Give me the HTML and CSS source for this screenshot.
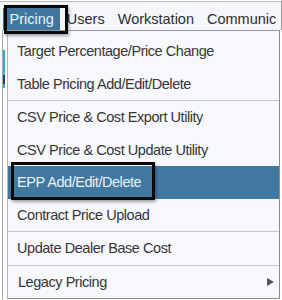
FILE: index.html
```html
<!DOCTYPE html>
<html>
<head>
<meta charset="utf-8">
<link rel="stylesheet" href="styles.css">
</head>
<body>
<div class="screen">
  <div class="menubar">
    <div class="top-item active">Pricing</div>
    <div class="top-item">Users</div>
    <div class="top-item">Workstation</div>
    <div class="top-item">Communic</div>
  </div>
  <div class="body-row">
    <div class="page-edge"><span class="edge-blue"></span><span class="edge-dark"></span></div>
    <div class="dropdown">
      <div class="item">Target Percentage/Price Change</div>
      <div class="item">Table Pricing Add/Edit/Delete</div>
      <div class="sep"></div>
      <div class="item">CSV Price &amp; Cost Export Utility</div>
      <div class="item">CSV Price &amp; Cost Update Utility</div>
      <div class="item selected">EPP Add/Edit/Delete</div>
      <div class="item">Contract Price Upload</div>
      <div class="sep"></div>
      <div class="item">Update Dealer Base Cost</div>
      <div class="sep"></div>
      <div class="item submenu"><span class="legacy">Legacy Pricing</span><span class="arrow"></span></div>
    </div>
  </div>
  <div class="mark mark-pricing"></div>
  <div class="mark mark-epp"></div>
</div>
</body>
</html>
```
FILE: styles.css
```css
html, body {
  margin: 0;
  padding: 0;
  background: #ffffff;
}
.screen {
  position: relative;
  width: 282px;
  height: 300px;
  overflow: hidden;
  font-family: "Liberation Sans", Arial, sans-serif;
  color: #333333;
}
.menubar {
  display: flex;
  height: 29px;
  margin-top: 1px;
  padding-left: 3px;
  border-top: 1px solid #b9b9b9;
  box-sizing: border-box;
  background: #f4f6f9;
  border-right: 1px solid #9a9a9a;
  overflow: hidden;
}
.top-item {
  font-size: 14.5px;
  line-height: 22px;
  height: 22px;
  margin-top: 6px;
  padding: 0 6.5px;
  color: #2e2e2e;
  white-space: nowrap;
}
.top-item.active {
  background: #3f77a1;
  color: #eef3f8;
}
.body-row {
  display: flex;
  height: 271px;
}
.page-edge {
  position: relative;
  width: 7px;
  box-sizing: border-box;
  border-left: 1px solid #ffffff;
}
.page-edge::before {
  content: "";
  display: block;
  width: 1px;
  height: 100%;
  margin-left: 1px;
  background: #a9a9a9;
}
.edge-blue {
  position: absolute;
  left: 2px;
  top: 20px;
  width: 2px;
  height: 38px;
  background: #36a9d6;
}
.edge-dark {
  position: absolute;
  left: 2px;
  top: 45px;
  width: 2px;
  height: 9px;
  background: #1e3f73;
}
.dropdown {
  width: 273px;
  height: 269px;
  box-sizing: border-box;
  padding-top: 4px;
  background: #f7f8fc;
  border: 1px solid #8e8e8e;
  border-left-color: #b8b8b8;
  border-top-color: #9a9a9a;
}
.item {
  display: flex;
  align-items: center;
  justify-content: space-between;
  height: 32.5px;
  padding: 0 5px 0 9px;
  font-size: 14.5px;
  letter-spacing: -0.45px;
  color: #363636;
  white-space: nowrap;
}
.item.selected {
  background: #41789f;
  color: #eaf0f6;
}
.legacy {
  padding-left: 1px;
}
.arrow {
  width: 0;
  height: 0;
  border-left: 7px solid #555555;
  border-top: 4px solid transparent;
  border-bottom: 4px solid transparent;
}
.sep {
  height: 1px;
  background: #c6c6c6;
}
.mark {
  position: absolute;
  border: 3px solid #0a0a0a;
  box-sizing: border-box;
  box-shadow: 1px 2px 3px rgba(0, 0, 0, 0.35);
}
.mark-pricing {
  left: 4px;
  top: 5px;
  width: 64px;
  height: 29px;
}
.mark-epp {
  left: 11px;
  top: 162px;
  width: 144px;
  height: 38px;
}
```
